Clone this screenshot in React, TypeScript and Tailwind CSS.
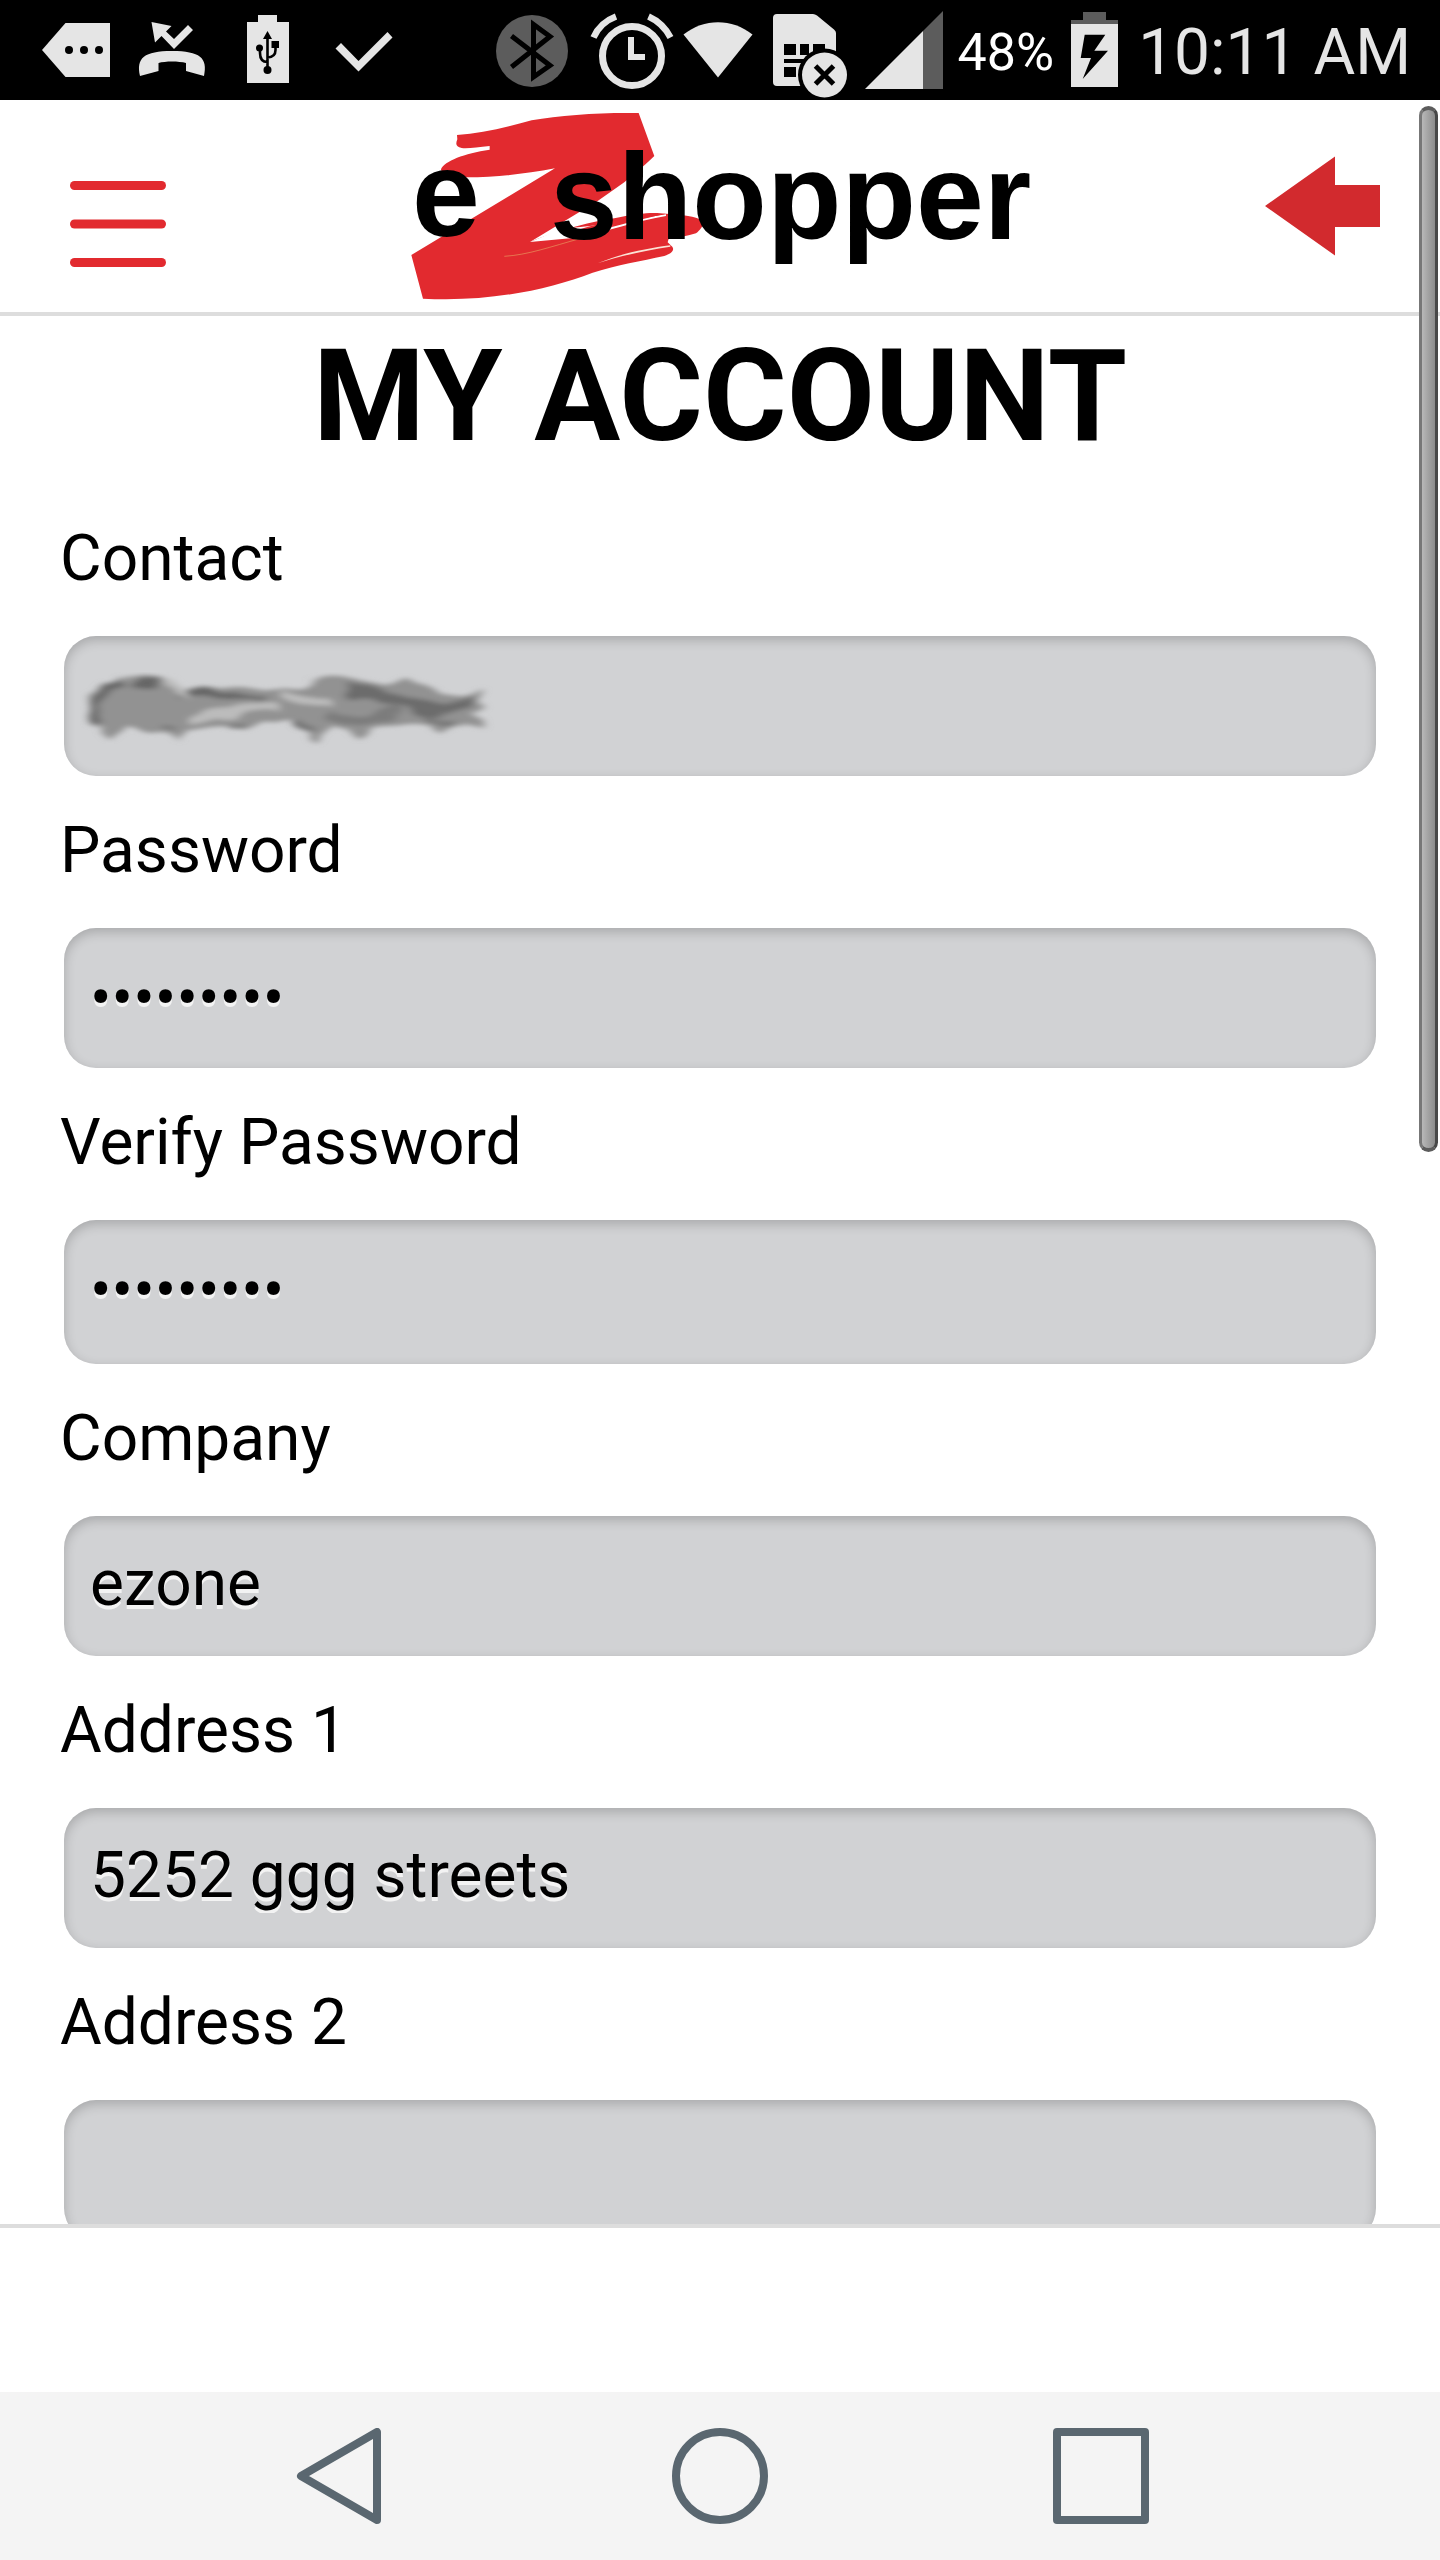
import type { ReactNode } from "react";

type GlyphProps = { x: number; w: number; label: string; children: ReactNode };

// One status bar glyph; x is where its slice of the 100px tall bar begins.
function Glyph({ x, w, label, children }: GlyphProps) {
  return (
    <svg role="img" aria-label={label} width={w} height={100} viewBox={`${x} 0 ${w} 100`} className="shrink-0 fill-[#e5e5e5]">
      {children}
    </svg>
  );
}

function StatusBar() {
  return (
    <div className="flex h-[100px] shrink-0 items-start justify-between bg-black pr-[29px] pl-[30px]">
      <div className="flex">
        <Glyph x={30} w={94} label="Message">
          <path d="M42 50 65.5 23H110V77H65.5Z" />
          <g fill="#000">
            <circle cx="69" cy="50" r="4" />
            <circle cx="84" cy="50" r="4" />
            <circle cx="99" cy="50" r="4" />
          </g>
        </Glyph>
        <Glyph x={124} w={102} label="Missed call">
          <path d="M151.5 22 171.5 26 166 31.5 174 39 188 25 193 30 174 49 161.5 36 155 42.5Z" />
          <path d="M140 76C136 58 144 51 172 51S208 58 204 76L186 71V63C179 61 165 61 158.500 63V71Z" />
        </Glyph>
        <Glyph x={226} w={86} label="USB charging">
          <path d="M258 15h19v7h12v61h-42v-61h11Z" />
          <g fill="#000">
            <circle cx="267.500" cy="70" r="4" />
            <path d="M267.500 31 272 39H263Z" />
            <circle cx="259.500" cy="48" r="3.500" />
            <path d="M271.500 41h7.500v7h-7.500Z" />
          </g>
          <path d="M267.500 38V70M260 48V53Q260 62 267.500 62M275.500 47V50Q275.500 57 267.500 57.500" fill="none" stroke="#000" strokeWidth="2.600" />
        </Glyph>
        <Glyph x={312} w={88} label="Done">
          <path d="M341 43 335.500 48.500 358.500 71.500 392.500 37.500 387.500 32 358.500 61Z" />
        </Glyph>
      </div>
      <div className="flex">
        <Glyph x={490} w={90} label="Bluetooth">
          <circle cx="532" cy="51" r="36" fill="#5c5c5c" />
          <path d="M511.500 36 550 65.500 533.500 77V24.500L550 36.500 511.500 67" fill="none" stroke="#000" strokeWidth="5" />
        </Glyph>
        <Glyph x={580} w={100} label="Alarm">
          <circle cx="632" cy="56" r="29.500" fill="none" stroke="#e5e5e5" strokeWidth="7" />
          <path d="M628 37h6v17h11v6H628Z" />
          <path d="M593.500 37.500Q600 22.500 616 16.500M648.500 16.500Q663 23 670.500 37.500" fill="none" stroke="#e5e5e5" strokeWidth="6.500" />
        </Glyph>
        <Glyph x={680} w={85} label="Wi-Fi">
          <path d="M683.500 34.500C704 18 732 18 752.500 34.500L718 77.500Z" />
        </Glyph>
        <Glyph x={765} w={95} label="No SIM card">
          <path d="M777 14H813Q815 14 817 15.500L834 29.500Q836 31 836 33V86H777Q773 86 773 82V18Q773 14 777 14Z" />
          <path d="M784 44h12v11h-12ZM800 44h9v11h-9ZM813 44h12v11h-12ZM784 59h30v4h-30ZM784 67h12v10h-12Z" fill="#000" />
          <circle cx="824.500" cy="75" r="26.500" fill="#000" />
          <circle cx="824.500" cy="75" r="22.500" />
          <path d="M815.500 66 833.500 84M833.500 66 815.500 84" stroke="#000" strokeWidth="5" />
        </Glyph>
        <Glyph x={860} w={90} label="Signal">
          <path d="M865 89 923 31V89Z" />
          <path d="M923 31 943 11V89H923Z" fill="#5c5c5c" />
        </Glyph>
        <span className="mx-2 text-[52px] leading-[106px] text-white">48%</span>
        <Glyph x={1062} w={66} label="Battery charging">
          <path d="M1083 12h23v8h12v5h-47v-5h12Z" fill="#5c5c5c" />
          <path d="M1071 24h47v63h-47Z" />
          <path d="M1084.700 34.700H1105.300L1094.300 50.700H1108L1082.700 79 1091 58H1080.700Z" fill="#000" />
        </Glyph>
        <span className="ml-[10px] text-[64px] leading-[106px] text-[#e5e5e5]">10:11 AM</span>
      </div>
    </div>
  );
}

function Logo() {
  return (
    <svg role="img" aria-label="eZ shopper" width="630" height="212" viewBox="0 0 630 212">
      <g transform="translate(0 5) scale(.3333)">
        <path
          fill="#e22a2f"
          d="M168 90C240 85 310 68 392 46C480 30 600 22 713 24L760 153C735 178 710 198 670 232L590 288 387 411C450 385 560 350 640 340C720 322 760 322 795 326C850 328 880 335 905 345C912 358 900 372 885 385C860 393 835 397 803 402L800 412 814 425C822 437 810 447 790 453C720 468 650 480 575 503C440 555 260 592 66 581L31 450 462 190C370 207 290 217 195 217C145 213 120 205 120 193C130 168 190 145 266 134V123C230 127 200 131 182 129C165 125 163 118 169 103Z"
        />
        <path fill="#fff" d="M387 411 480 372C600 362 700 345 795 328V333C700 350 620 378 540 397Z" />
        <path fill="#e22a2f" d="M540 372C600 352 700 334 795 326C700 345 620 372 560 383Z" />
        <path fill="#fbe3d6" d="M590 475C660 445 740 430 808 421V425C740 435 660 452 590 475Z" />
        <path fill="none" stroke="#e99a5f" strokeWidth="2" d="M310 454C380 450 450 425 540 400" />
      </g>
      <g className="font-['Liberation_Sans',Arial,sans-serif] text-[122px] font-bold">
        <text x="11" y="136">e</text>
        <text x="149" y="139">shopper</text>
      </g>
    </svg>
  );
}

function Header() {
  return (
    <header className="flex h-[216px] shrink-0 items-start justify-between border-b-4 border-[#dddddd] bg-white pr-[60px] pl-[70px]">
      <button type="button" aria-label="Menu" className="mt-20">
        <svg width="96" height="88" viewBox="0 0 96 88" fill="#e22a2f">
          <rect y="1" width="96" height="9" rx="4.500" />
          <rect y="39.500" width="96" height="9" rx="4.500" />
          <rect y="78" width="96" height="9" rx="4.500" />
        </svg>
      </button>
      <Logo />
      <button type="button" aria-label="Back" className="mt-14">
        <svg width="115" height="100" viewBox="0 0 115 100" fill="#d22a2e">
          <path d="M0 50 70 .5V29H115V71H70V99.500Z" />
        </svg>
      </button>
    </header>
  );
}

// Smudge that hides the contact's name.
function Smudge() {
  return (
    <svg aria-hidden="true" className="pointer-events-none absolute top-9 left-4 h-[80px] w-[420px]" viewBox="0 0 420 80">
      <defs>
        <filter id="smear" x="-5%" y="-25%" width="110%" height="150%">
          <feTurbulence type="fractalNoise" baseFrequency="0.02 0.05" numOctaves="2" seed="7" result="noise" />
          <feDisplacementMap in="SourceGraphic" in2="noise" scale="22" xChannelSelector="R" yChannelSelector="G" />
          <feGaussianBlur stdDeviation="4 2" />
        </filter>
      </defs>
      <g filter="url(#smear)">
        <path
          fill="#929292"
          d="M10 22 22 10 44 5 84 9 96 18 125 20 155 14 185 18 210 14 245 6 265 10 300 12 330 10 360 18 385 20 404 18 396 28 406 36 392 42 406 52 378 50 362 60 350 52 325 52 290 54 282 70 270 54 255 52 235 68 218 52 180 54 165 60 150 54 110 56 98 72 84 60 72 56 45 56 32 70 22 56 14 50 12 34Z"
        />
        <g fill="none">
          <path d="M20 50 18 26Q24 14 42 8" stroke="#686868" strokeWidth="9" />
          <path d="M50 12H80M96 24Q140 20 190 27" stroke="#666" strokeWidth="6" />
          <path d="M265 22Q300 18 320 30T392 28" stroke="#6c6c6c" strokeWidth="11" />
          <path d="M250 44Q290 46 320 38" stroke="#7c7c7c" strokeWidth="10" />
          <path d="M215 54 235 58M348 44 378 47M150 54H165M80 50 96 56" stroke="#707070" strokeWidth="5" />
          <path d="M90 12 108 26M200 22 250 32M110 44 200 36" stroke="#bcbcbc" strokeWidth="7" />
        </g>
      </g>
    </svg>
  );
}

type FieldData = { id: string; label: string; type: "text" | "password"; value: string; size: string; hidden?: boolean };

const fields: FieldData[] = [
  { id: "contact", label: "Contact", type: "text", value: "", size: "h-[140px] pb-1.5", hidden: true },
  { id: "password", label: "Password", type: "password", value: "shopper12", size: "h-[140px]" },
  { id: "verify", label: "Verify Password", type: "password", value: "shopper12", size: "h-[144px] pb-1" },
  { id: "company", label: "Company", type: "text", value: "ezone", size: "h-[140px] pb-1.5" },
  { id: "address1", label: "Address 1", type: "text", value: "5252 ggg streets", size: "h-[140px] pb-1.5" },
  { id: "address2", label: "Address 2", type: "text", value: "", size: "h-[140px] pb-1.5" },
];

function Field({ id, label, type, value, size, hidden }: FieldData) {
  return (
    <div className="flex flex-col">
      <label htmlFor={id} className="mb-[37px] self-start text-[64px] leading-[80px]">
        {label}
      </label>
      <div className="relative mx-1">
        <input
          id={id}
          type={type}
          defaultValue={value}
          className={`${size} block w-full rounded-[32px] bg-[#d1d2d4] px-[26px] text-[64px] shadow-[inset_0_4px_12px_rgba(0,0,0,0.2)] outline-none [text-shadow:0_4px_0_#f3f3f3]`}
        />
        {hidden && <Smudge />}
      </div>
    </div>
  );
}

function NavBar() {
  return (
    <nav className="flex h-[168px] shrink-0 items-center justify-center gap-[285px] bg-[#f4f4f4]">
      <button type="button" aria-label="Back">
        <svg width="96" height="96" viewBox="0 0 96 96" fill="none" stroke="#5a6770" strokeWidth="8" strokeLinejoin="round">
          <path d="M86 4V92L10 48Z" />
        </svg>
      </button>
      <button type="button" aria-label="Home">
        <svg width="96" height="96" viewBox="0 0 96 96" fill="none" stroke="#5a6770" strokeWidth="8">
          <circle cx="48" cy="48" r="44" />
        </svg>
      </button>
      <button type="button" aria-label="Recent apps">
        <svg width="96" height="96" viewBox="0 0 96 96" fill="none" stroke="#5a6770" strokeWidth="8" strokeLinejoin="round">
          <path d="M4 4H92V92H4Z" />
        </svg>
      </button>
    </nav>
  );
}

export default function App() {
  return (
    <div className="relative flex h-screen w-full flex-col overflow-hidden bg-white font-[Roboto,sans-serif] text-black">
      <StatusBar />
      <Header />
      <main className="min-h-0 flex-1 overflow-hidden px-[60px] pt-[5px]">
        <h1 className="mb-12 text-center text-[128px] leading-[150px] font-bold">MY ACCOUNT</h1>
        <form className="flex flex-col gap-[35px]">
          {fields.map((field) => (
            <Field key={field.id} {...field} />
          ))}
        </form>
      </main>
      <footer className="h-[168px] shrink-0 border-t-4 border-[#dddddd] bg-white" />
      <NavBar />
      <div className="absolute top-[106px] right-[2px] h-[1046px] w-[19px] rounded-full border-x-[3px] border-y-4 border-t-[#5c5c5c] border-r-[#484848] border-b-[#5c5c5c] border-l-[#777777] bg-linear-to-r from-[#b8b8b8] to-[#8c8c8c]" />
    </div>
  );
}
